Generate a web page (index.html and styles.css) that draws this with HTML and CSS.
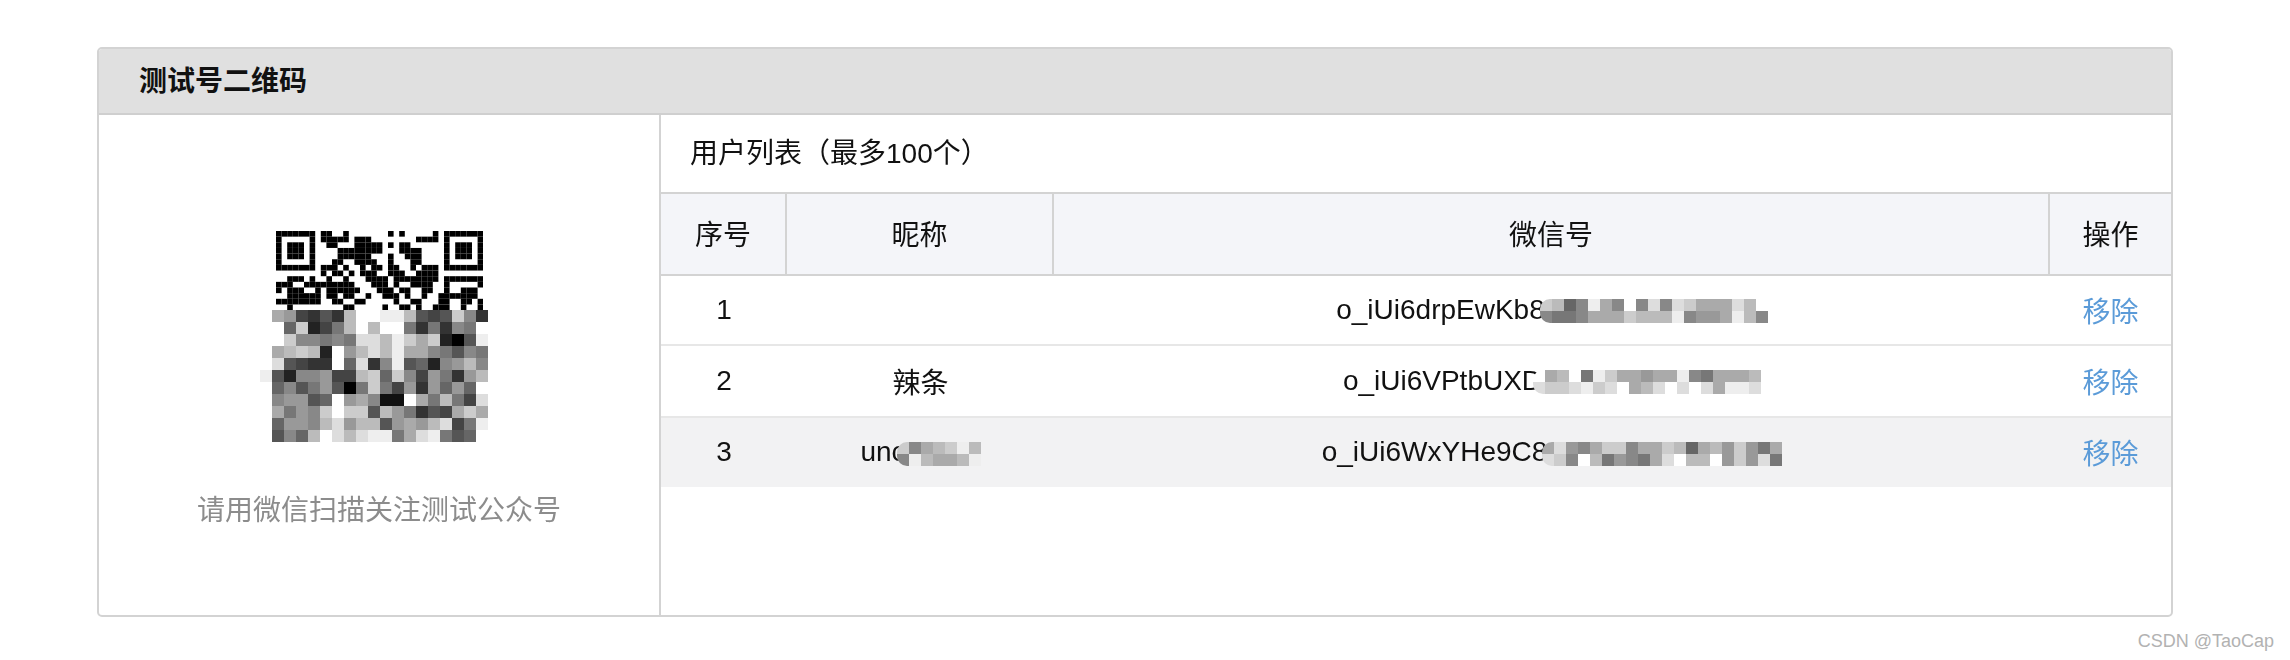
FILE: index.html
```html
<!DOCTYPE html>
<html lang="zh-CN">
<head>
  <meta charset="UTF-8" />
  <title>测试号二维码</title>
  <link rel="stylesheet" href="styles.css">
</head>
<body>
  <div class="panel">
    <div class="panel-head">测试号二维码</div>
    <div class="panel-body">
      <div class="qr-side">
        <canvas class="qr-code" id="qr-code" width="207" height="79"></canvas>
        <canvas class="qr-mosaic mosaic" data-rows="fa94353bffeeb545c83|ff6c247bfbff737387f|ffc88787ddbecac205e|fabcb2f9bdbeaa87587|fd5433f6d38e56289b8|e5288944bc6c849739b|f68579507c74939696f|f89956f9a811fa7b74d|fa798cfcc5b97354aca|f6998bd9bb59a9bd47e|f586bfdbdee7ade756f"></canvas>
        <p class="qr-tip">请用微信扫描关注测试公众号</p>
      </div>
      <div class="user-side">
        <div class="user-title">用户列表（最多100个）</div>
        <table class="user-table">
          <colgroup>
            <col class="col-num">
            <col class="col-name">
            <col class="col-id">
            <col class="col-op">
          </colgroup>
          <thead>
            <tr><th>序号</th><th>昵称</th><th>微信号</th><th>操作</th></tr>
          </thead>
          <tbody>
            <tr class="first">
              <td>1</td>
              <td></td>
              <td>o_iUi6drpEwKb8<canvas class="mosaic blur" data-rows="cb68ea8f8d8dcaaadbf|8778aaacbbbe899aeb8"></canvas></td>
              <td><a href="#">移除</a></td>
            </tr>
            <tr>
              <td>2</td>
              <td>辣条</td>
              <td>o_iUi6VPtbUXD<canvas class="mosaic blur tight" data-rows="fabf7ecaa9aae87aaab|dccdecdfabdfdfdaeed"></canvas></td>
              <td><a href="#">移除</a></td>
            </tr>
            <tr class="alt">
              <td>3</td>
              <td>unc<canvas class="mosaic blur tight" data-rows="c8abceb|8ebaabe"></canvas></td>
              <td>o_iUi6WxYHe9C8<canvas class="mosaic blur" data-rows="ad98acc8aacb6ab9c97a|dc8fb7987adfbbf9c9d7"></canvas></td>
              <td><a href="#">移除</a></td>
            </tr>
          </tbody>
        </table>
      </div>
    </div>
  </div>
  <div class="watermark">CSDN @TaoCap</div>
  <script src="mosaic.js"></script>
</body>
</html>
```

FILE: styles.css
```css
body {
  margin: 0;
  padding: 47px 117px 0 97px;
  font-family: "Liberation Sans", "Noto Sans CJK SC", sans-serif;
  font-size: 28px;
  color: #111;
  background: #fff;
}
.panel {
  height: 570px;
  box-sizing: border-box;
  display: flex;
  flex-direction: column;
  border: 2px solid #d3d3d3;
  border-radius: 5px;
  overflow: hidden;
}
.panel-head {
  height: 64px;
  flex: none;
  padding-left: 40px;
  line-height: 65px;
  font-weight: bold;
  background: #e0e0e0;
  border-bottom: 2px solid #cfcfcf;
}
.panel-body {
  flex: 1;
  display: flex;
}
.qr-side {
  width: 562px;
  flex: none;
  padding-top: 116px;
  box-sizing: border-box;
  display: flex;
  flex-direction: column;
  align-items: center;
  border-right: 2px solid #d3d3d3;
}
.qr-code {
  display: block;
}
.qr-mosaic {
  display: block;
  margin-right: 10px;
}
.qr-tip {
  margin: 49px 0 0;
  line-height: 40px;
  color: #8c8c8c;
}
.user-side {
  flex: 1;
}
.user-title {
  height: 77px;
  padding-left: 29px;
  line-height: 78px;
  border-bottom: 2px solid #d3d3d3;
}
.user-table {
  width: 100%;
  table-layout: fixed;
  border-collapse: separate;
  border-spacing: 0;
}
.col-num { width: 126px; }
.col-name { width: 267px; }
.col-id { width: 996px; }
.user-table th {
  height: 82px;
  padding: 0 0 3px;
  box-sizing: border-box;
  font-weight: normal;
  background: #f4f5f9;
  border-right: 2px solid #d3d3d3;
  border-bottom: 2px solid #d3d3d3;
}
.user-table th:last-child {
  border-right: none;
}
.user-table td {
  height: 69px;
  padding: 0 0 1px;
  box-sizing: content-box;
  text-align: center;
  white-space: nowrap;
  border-bottom: 2px solid #e7e7e7;
}
.user-table .first td {
  height: 67px;
}
.user-table .alt td {
  height: 68px;
  background: #f2f2f3;
  border-bottom: none;
}
.user-table a {
  color: #5b9bd8;
  text-decoration: none;
}
.blur {
  margin-left: -5px;
  vertical-align: middle;
  border-radius: 10px 0 0 10px;
}
.blur.tight {
  margin-left: -9px;
}
.watermark {
  margin: 12px -101px 0 0;
  text-align: right;
  font-size: 18px;
  line-height: 24px;
  color: #b2b2b2;
}
```

FILE: mosaic.js
```js
// pixelated patches: each character is one grey level (0 black .. f white)
document.querySelectorAll(".mosaic").forEach(function (canvas) {
  const rows = canvas.dataset.rows.split("|");
  const cell = 12;
  canvas.width = rows[0].length * cell;
  canvas.height = rows.length * cell;
  const ctx = canvas.getContext("2d");
  rows.forEach(function (row, y) {
    row.split("").forEach(function (c, x) {
      const v = parseInt(c, 16) * 17;
      ctx.fillStyle = "rgb(" + v + "," + v + "," + v + ")";
      ctx.fillRect(x * cell, y * cell, cell, cell);
    });
  });
});

// top half of the qr code, one string per module row
const qrRows = [
  "1111111" + "0" + "1100100000" + "001010000010" + "1111111",
  "1000001" + "0" + "1111101110" + "000000011110" + "1000001",
  "1011101" + "0" + "0110001111" + "101011000000" + "1011101",
  "1011101" + "0" + "0001111111" + "100011110000" + "1011101",
  "1011101" + "0" + "0001111110" + "001001110000" + "1011101",
  "1000001" + "0" + "0011001111" + "001000110000" + "1000001",
  "1111111" + "0" + "1110100101" + "101100101110" + "1111111",
  "0000000" + "0" + "1011010111" + "001110011110" + "0000000",
  "0011101" + "0" + "0100100011" + "110111111110" + "1111111",
  "1110011" + "1" + "1111110001" + "110100111100" + "1000001",
  "1011100" + "1" + "0111111000" + "111011001100" + "1001110",
  "0011111" + "1" + "0110110010" + "011101001001" + "1111110",
  "1111111" + "1" + "0011001100" + "000100110001" + "1001101",
  "0010000" + "0" + "0000110000" + "010011010011" + "1001001"
];
const qr = document.getElementById("qr-code").getContext("2d");
qr.fillStyle = "#000";
qrRows.forEach(function (row, y) {
  row.split("").forEach(function (c, x) {
    if (c === "1") qr.fillRect(x * 5.6, y * 5.65, 5.6, 5.65);
  });
});
```
